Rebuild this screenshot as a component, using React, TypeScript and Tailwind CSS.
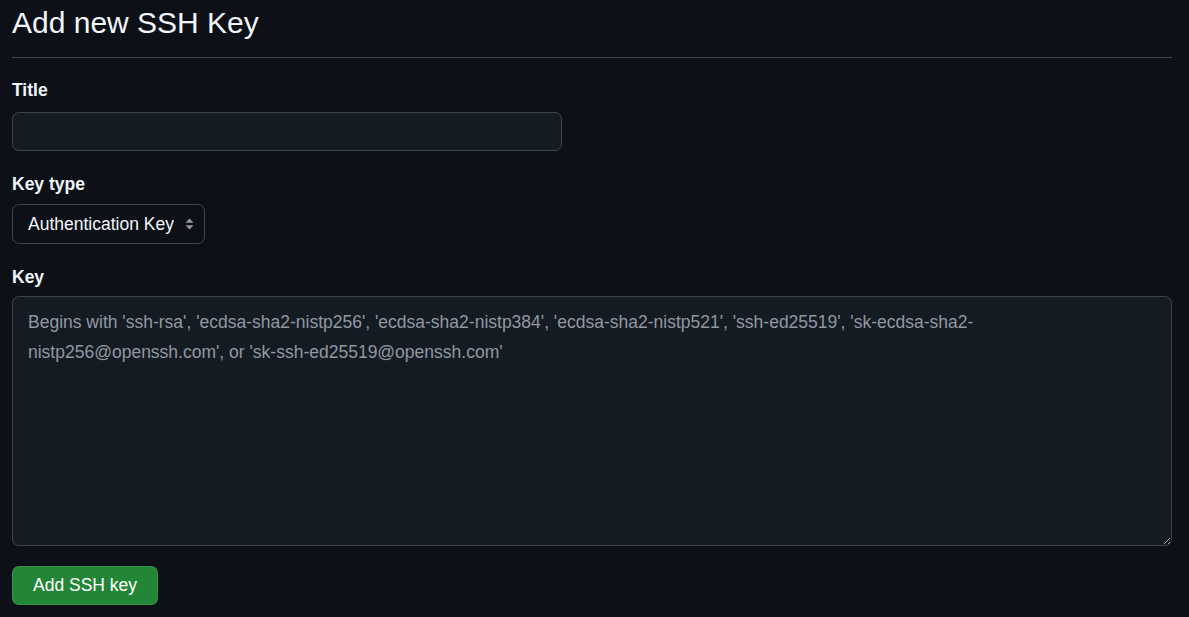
import { useState } from 'react';

export default function App() {
  const [title, setTitle] = useState('');
  const [keyType, setKeyType] = useState('authentication');
  const [keyValue, setKeyValue] = useState('');

  return (
    <div
      className="min-h-screen bg-[#0d1117] pl-3 pr-[17px] text-[#f0f6fc]"
      style={{ fontFamily: '"Liberation Sans", Arial, sans-serif' }}
    >
      {/* Header */}
      <div className="border-b border-[#3d444d] pt-[3px] pb-[14px]">
        <h2 className="text-[30px] leading-[40px] font-normal">Add new SSH Key</h2>
      </div>

      <form className="pt-[22px]" onSubmit={(e) => e.preventDefault()}>
        {/* Title */}
        <label className="block text-[17.5px] font-bold leading-[20px] mb-[12px]">Title</label>
        <input
          value={title}
          onChange={(e) => setTitle(e.target.value)}
          className="block w-[550px] h-[39px] rounded-[7px] border border-[#3d444d] bg-[#151b23] px-[15px] text-[17.5px] outline-none"
        />

        {/* Key type */}
        <label className="block text-[17.5px] font-bold leading-[20px] mt-[23px] mb-[10px]">Key type</label>
        <div className="relative w-[193px]">
          <select
            value={keyType}
            onChange={(e) => setKeyType(e.target.value)}
            className="block w-full h-[40px] appearance-none rounded-[7px] border border-[#3d444d] bg-[#0d1117] pl-[15px] pr-[30px] text-[17.5px] text-[#f0f6fc] outline-none"
          >
            <option value="authentication">Authentication Key</option>
            <option value="signing">Signing Key</option>
          </select>
          <svg
            className="pointer-events-none absolute right-[10px] top-[14px]"
            width="11"
            height="12"
            viewBox="0 0 11 12"
          >
            <path d="M5.5 0.5 L9.5 4.8 H1.5 Z" fill="#9198a1" />
            <path d="M5.5 11.5 L9.5 7.2 H1.5 Z" fill="#9198a1" />
          </svg>
        </div>

        {/* Key */}
        <label className="block text-[17.5px] font-bold leading-[20px] mt-[23px] mb-[9px]">Key</label>
        <textarea
          value={keyValue}
          onChange={(e) => setKeyValue(e.target.value)}
          placeholder="Begins with 'ssh-rsa', 'ecdsa-sha2-nistp256', 'ecdsa-sha2-nistp384', 'ecdsa-sha2-nistp521', 'ssh-ed25519', 'sk-ecdsa-sha2-nistp256@openssh.com', or 'sk-ssh-ed25519@openssh.com'"
          className="block w-full h-[250px] rounded-[7px] border border-[#3d444d] bg-[#151b23] px-[15px] py-[10px] text-[17.5px] leading-[30px] text-[#f0f6fc] placeholder:text-[#9198a1] outline-none"
        />

        <button
          type="submit"
          className="mt-[20px] h-[39px] rounded-[7px] border border-[#ffffff1a] bg-[#238636] px-[20px] text-[17.5px] text-white"
        >
          Add SSH key
        </button>
      </form>
    </div>
  );
}
